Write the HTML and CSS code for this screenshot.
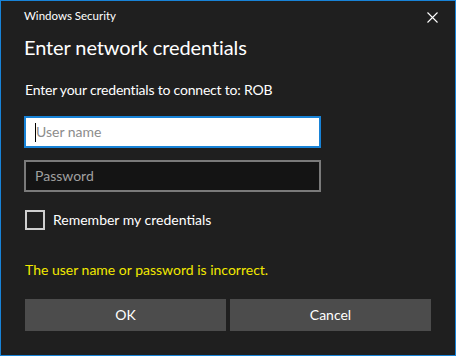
FILE: index.html
```html
<!DOCTYPE html>
<html lang="en">
<head>
<meta charset="utf-8">
<title>Windows Security</title>
<link rel="stylesheet" href="styles.css">
</head>
<body>
<div class="window">
  <div class="titlebar">
    <span class="title">Windows Security</span>
    <svg class="close" width="11" height="11" viewBox="0 0 11 11" aria-label="Close">
      <path d="M0.5 0.5 L10.5 10.5 M10.5 0.5 L0.5 10.5" stroke="#ffffff" stroke-width="1.1" fill="none"/>
    </svg>
  </div>
  <div class="content">
    <h1 class="heading">Enter network credentials</h1>
    <p class="prompt">Enter your credentials to connect to: ROB</p>
    <div class="field field-focus"><span class="caret"></span><span class="placeholder">User name</span></div>
    <div class="field field-dark"><span class="placeholder">Password</span></div>
    <div class="remember">
      <span class="checkbox"></span>
      <span class="remember-label">Remember my credentials</span>
    </div>
    <p class="error">The user name or password is incorrect.</p>
    <div class="buttons">
      <div class="button">OK</div>
      <div class="button">Cancel</div>
    </div>
  </div>
</div>
</body>
</html>
```
FILE: styles.css
```css
html, body {
  margin: 0;
  padding: 0;
  background: #1f1f1f;
}
.window {
  box-sizing: border-box;
  width: 456px;
  height: 356px;
  border: 1px solid #1883d7;
  background: #1f1f1f;
  color: #ffffff;
  font-family: Lato, "Noto Sans", sans-serif;
}
.titlebar {
  display: flex;
  justify-content: space-between;
  align-items: flex-start;
  height: 32px;
  padding: 7px 17px 0 23px;
  box-sizing: border-box;
}
.title {
  font-size: 11.5px;
  line-height: 16px;
}
.close {
  display: block;
  margin-top: 4px;
}
.content {
  padding: 0 23px;
}
.heading {
  margin: 0;
  font-weight: normal;
  font-size: 20px;
  line-height: 28px;
  letter-spacing: -0.1px;
}
.prompt {
  margin: 19px 0 0 1px;
  font-size: 14px;
  line-height: 20px;
  letter-spacing: -0.2px;
}
.field {
  box-sizing: border-box;
  width: 297px;
  height: 32px;
  border: 2px solid #7a7a7a;
  background: #141414;
  display: flex;
  align-items: center;
  padding-left: 9px;
  font-size: 14px;
  line-height: 20px;
}
.field-focus {
  margin-top: 16px;
  border-color: #1883d7;
  background: #ffffff;
}
.field-dark {
  margin-top: 12px;
}
.field-focus .placeholder {
  color: #8c8c8c;
}
.field-dark .placeholder {
  color: #a0a0a0;
}
.caret {
  width: 1px;
  height: 19px;
  background: #000000;
}
.remember {
  display: flex;
  align-items: center;
  margin-top: 18px;
  height: 20px;
  padding-left: 1px;
}
.checkbox {
  box-sizing: border-box;
  width: 20px;
  height: 20px;
  border: 2px solid #cfcfcf;
}
.remember-label {
  margin-left: 8px;
  font-size: 14px;
  line-height: 20px;
}
.error {
  margin: 30px 0 0 1px;
  color: #f2e900;
  font-size: 14px;
  line-height: 20px;
}
.buttons {
  display: grid;
  grid-template-columns: 1fr 1fr;
  gap: 4px;
  margin-top: 19px;
  margin-left: 1px;
  width: 406px;
}
.button {
  height: 32px;
  background: #4c4c4c;
  display: flex;
  align-items: center;
  justify-content: center;
  font-size: 14px;
  line-height: 20px;
}
```
